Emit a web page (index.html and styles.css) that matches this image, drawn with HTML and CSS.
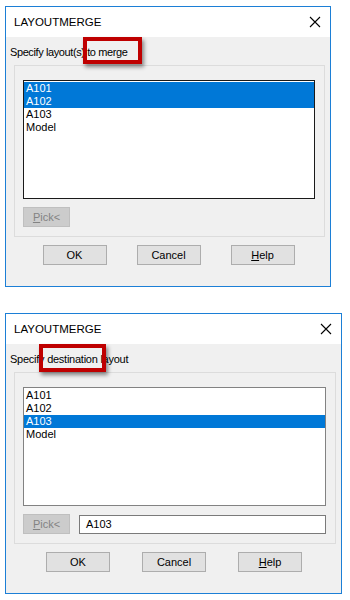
FILE: index.html
```html
<!DOCTYPE html>
<html lang="en">
<head>
    <meta charset="UTF-8">
    <title>LAYOUTMERGE</title>
    <link rel="stylesheet" href="styles.css">
</head>
<body>
    <div class="dialog dialog-one">
        <div class="titlebar">
            <span class="title">LAYOUTMERGE</span>
            <svg class="close" width="12" height="12" viewBox="0 0 12 12">
                <path d="M1 1 L11 11 M11 1 L1 11" stroke="#000" stroke-width="1.1" fill="none"/>
            </svg>
        </div>
        <div class="body">
            <div class="prompt">Specify layout(s) to merge</div>
            <div class="group">
                <ul class="listbox focused">
                    <li class="selected">A101</li>
                    <li class="selected">A102</li>
                    <li>A103</li>
                    <li>Model</li>
                </ul>
                <div class="pick-row">
                    <button class="btn pick" disabled><u>P</u>ick&lt;</button>
                </div>
            </div>
            <div class="buttons">
                <button class="btn">OK</button>
                <button class="btn">Cancel</button>
                <button class="btn"><u>H</u>elp</button>
            </div>
            <!-- callout marker -->
            <div class="callout callout-one"></div>
        </div>
    </div>

    <div class="dialog dialog-two">
        <div class="titlebar">
            <span class="title">LAYOUTMERGE</span>
            <svg class="close" width="12" height="12" viewBox="0 0 12 12">
                <path d="M1 1 L11 11 M11 1 L1 11" stroke="#000" stroke-width="1.1" fill="none"/>
            </svg>
        </div>
        <div class="body">
            <div class="prompt">Specify destination layout</div>
            <div class="group">
                <ul class="listbox">
                    <li>A101</li>
                    <li>A102</li>
                    <li class="selected">A103</li>
                    <li>Model</li>
                </ul>
                <div class="pick-row">
                    <button class="btn pick" disabled><u>P</u>ick&lt;</button>
                    <div class="textbox">A103</div>
                </div>
            </div>
            <div class="buttons">
                <button class="btn">OK</button>
                <button class="btn">Cancel</button>
                <button class="btn"><u>H</u>elp</button>
            </div>
            <div class="callout callout-two"></div>
        </div>
    </div>
</body>
</html>
```

FILE: styles.css
```css
body {
    margin: 0;
    background-color: #fff;
    font-family: "Liberation Sans", Arial, sans-serif;
    font-size: 11px;
    color: #000;
}
.dialog {
    border: 1px solid #1c7fd6;
    background-color: #f0f0f0;
    display: flex;
    flex-direction: column;
    box-sizing: border-box;
    height: 281px;
}
.dialog-one {
    margin: 6px 0 0 5px;
    width: 326px;
}
.dialog-two {
    margin: 26px 0 0 5px;
    width: 337px;
}
.titlebar {
    height: 30px;
    background-color: #fff;
    display: flex;
    align-items: center;
    justify-content: space-between;
    padding: 0 9px 0 8px;
    flex-shrink: 0;
}
.title {
    font-size: 11.5px;
}
.body {
    position: relative;
    flex: 1;
    display: flex;
    flex-direction: column;
    padding: 0 5px 0 4px;
}
.prompt {
    height: 14px;
    line-height: 14px;
    margin-top: 8px;
    letter-spacing: -0.25px;
}
.dialog-one .prompt {
    letter-spacing: -0.4px;
}
.group {
    margin: 6px 0 0 4px;
    border: 1px solid #dcdcdc;
    padding: 14px 9px 9px 8px;
    display: flex;
    flex-direction: column;
}
.listbox {
    list-style: none;
    margin: 0;
    padding: 1px 0 0 0;
    height: 119px;
    box-sizing: border-box;
    background-color: #fff;
    border: 1px solid #828282;
}
.listbox.focused {
    border-color: #1a1a1a;
}
.listbox li {
    height: 13px;
    line-height: 13px;
    padding-left: 2px;
}
.listbox li.selected {
    background-color: #0078d7;
    color: #fff;
}
.pick-row {
    display: flex;
    align-items: center;
    gap: 9px;
    margin-top: 8px;
}
.btn {
    font-family: inherit;
    font-size: 11px;
    height: 20px;
    width: 64px;
    padding: 0;
    background-color: #e1e1e1;
    border: 1px solid #adadad;
    color: #000;
}
.btn u {
    text-decoration: underline;
}
.pick {
    width: 47px;
    background-color: #cccccc;
    border-color: #bfbfbf;
    color: #838383;
}
.textbox {
    flex: 1;
    height: 19px;
    box-sizing: border-box;
    border: 1px solid #7a7a7a;
    background-color: #fff;
    line-height: 17px;
    padding-left: 6px;
}
.buttons {
    display: flex;
    justify-content: center;
    gap: 30px;
    margin-top: 8px;
    padding-left: 2px;
}
.dialog-two .buttons {
    gap: 32px;
}
.callout {
    position: absolute;
    border: 4px solid #bf0000;
    box-shadow: 2px 3px 4px rgba(0, 0, 0, 0.45);
    box-sizing: border-box;
}
.callout-one {
    left: 77px;
    top: 0;
    width: 59px;
    height: 27px;
}
.callout-two {
    left: 33px;
    top: 0;
    width: 67px;
    height: 28px;
}
```
